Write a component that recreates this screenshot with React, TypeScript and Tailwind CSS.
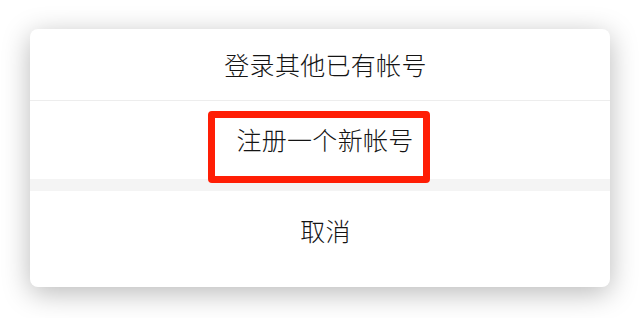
export default function App() {
  const font = { fontFamily: '"Noto Sans CJK SC", "Noto Sans", sans-serif' };
  return (
    <div className="w-[640px] h-[318px] bg-white pt-[29px] pl-[30px]" style={font}>
      <div className="relative w-[580px] rounded-[8px] bg-white shadow-[0_6px_28px_rgba(0,0,0,0.28)] text-[25px] font-light tracking-[0.3px] text-[#141414]">
        <div className="h-[72px] flex items-center justify-center pl-[11px] border-b border-[#ededed]">
          登录其他已有帐号
        </div>
        <div className="h-[78px] flex items-center justify-center pl-[10px]">
          注册一个新帐号
        </div>
        <div className="h-[12px] bg-[#f4f4f4]" />
        <div className="h-[96px] flex items-center justify-center pl-[11px] pb-[16px]">
          取消
        </div>
        <div className="absolute left-[178px] top-[82px] w-[222px] h-[72px] border-[7px] border-[#ff1e05] rounded-[4px]" />
      </div>
    </div>
  );
}
